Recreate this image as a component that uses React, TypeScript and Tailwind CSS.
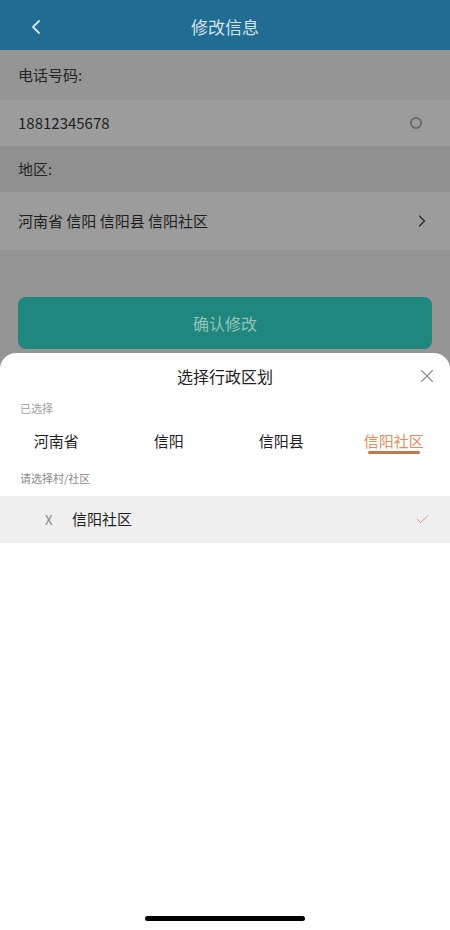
import { ChevronLeft, ChevronRight, X, Check } from "lucide-react";

const tabs = ["河南省", "信阳", "信阳县", "信阳社区"];

export default function App() {
  return (
    <div
      className="relative h-[930px] w-full overflow-hidden bg-[#959595]"
      style={{ fontFamily: '"Noto Sans CJK SC", "Noto Sans", sans-serif' }}
    >
      {/* page under the dimmed backdrop */}
      <header className="relative flex h-[50px] items-center justify-center bg-[#206c93] pt-[4px]">
        <ChevronLeft className="absolute left-[24px] h-6 w-6 text-[#d9e6ee]" strokeWidth={1.8} />
        <span className="text-[17px] text-[#d3e2ea]">修改信息</span>
      </header>

      <div className="flex h-[50px] items-center px-[18px] text-[15px] text-[#262626]">电话号码:</div>
      <div className="flex h-[46px] items-center justify-between bg-[#9c9c9c] px-[18px]">
        <span className="text-[15px] text-[#1e1e1e]">18812345678</span>
        <span className="mr-[10px] h-[12px] w-[12px] rounded-full border-2 border-[#6a6a6a]" />
      </div>
      <div className="flex h-[46px] items-center bg-[#909090] px-[18px] text-[15px] text-[#262626]">地区:</div>
      <div className="flex h-[58px] items-center justify-between bg-[#9c9c9c] px-[18px]">
        <span className="text-[15px] text-[#1e1e1e]">河南省 信阳 信阳县 信阳社区</span>
        <ChevronRight className="h-5 w-5 text-[#2a2a2a]" strokeWidth={1.6} />
      </div>

      <div className="mx-[18px] mt-[47px] flex h-[52px] items-center justify-center rounded-[8px] bg-[#1f877d] text-[16px] text-[#94c4be]">
        确认修改
      </div>

      {/* bottom sheet */}
      <div className="absolute inset-x-0 bottom-0 top-[353px] rounded-t-[16px] bg-white">
        <div className="relative flex h-[46px] items-center justify-center">
          <span className="text-[16px] text-[#222]">选择行政区划</span>
          <X className="absolute right-[12px] h-[22px] w-[22px] text-[#8a8a8a]" strokeWidth={1.2} />
        </div>
        <div className="flex h-[18px] items-center px-[20px] text-[11px] text-[#a0a0a0]">已选择</div>
        <div className="mt-[14px] grid grid-cols-4">
          {tabs.map((t, i) => {
            const active = i === tabs.length - 1;
            return (
              <div key={t} className="flex flex-col items-center">
                <span className={active ? "text-[15px] leading-[20px] text-[#e58c5c]" : "text-[15px] leading-[20px] text-[#1e1e1e]"}>{t}</span>
                <span className={active ? "h-[3px] w-[52px] rounded-full bg-[#c7764b]" : "h-[3px] w-[52px]"} />
              </div>
            );
          })}
        </div>
        <div className="mt-[11px] flex h-[26px] items-center px-[20px] text-[11px] text-[#8a8a8a]">请选择村/社区</div>
        <div className="mt-[5px] flex h-[47px] items-center bg-[#efefef] pl-[45px] pr-[20px]">
          <span className="w-[27px] text-[13px] text-[#8a8a8a]">X</span>
          <span className="flex-1 text-[15px] text-[#1e1e1e]">信阳社区</span>
          <Check className="h-[15px] w-[15px] text-[#d4865c]" strokeWidth={1.4} />
        </div>

        <div className="absolute bottom-[9px] left-1/2 h-[5px] w-[160px] -translate-x-1/2 rounded-full bg-black" />
      </div>
    </div>
  );
}
